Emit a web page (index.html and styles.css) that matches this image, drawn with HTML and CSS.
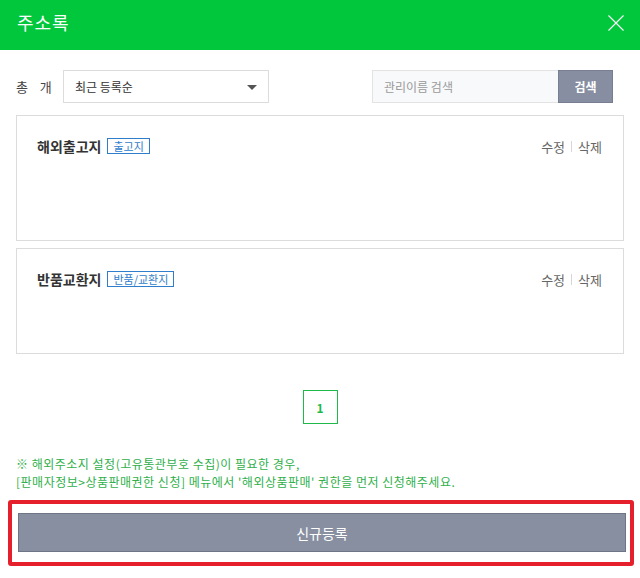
FILE: index.html
```html
<!DOCTYPE html>
<html>
<head>
    <title>주소록</title>
    <link rel="stylesheet" href="styles.css">
</head>
<body>
    <div class="modal">
        <div class="modal-header">
            <h1>주소록</h1>
            <button class="close" type="button">
                <svg width="16" height="16" viewBox="0 0 16 16">
                    <path d="M0.5 0.5 L15.5 15.5 M15.5 0.5 L0.5 15.5" stroke="#fff" stroke-width="1.1" fill="none"/>
                </svg>
            </button>
        </div>

        <div class="modal-body">
            <div class="toolbar">
                <span class="total">총 <em></em> 개</span>
                <div class="select">
                    <span>최근 등록순</span>
                    <i class="caret"></i>
                </div>
                <form class="search">
                    <input type="text" placeholder="관리이름 검색">
                    <button type="submit">검색</button>
                </form>
            </div>

            <ul class="addr-list">
                <li class="addr-item">
                    <div class="addr-head">
                        <strong>해외출고지</strong>
                        <span class="tag">출고지</span>
                        <div class="actions">
                            <a href="#">수정</a>
                            <span class="bar"></span>
                            <a href="#">삭제</a>
                        </div>
                    </div>
                    <div class="addr-detail">
                        <p></p>
                        <p></p>
                        <p></p>
                    </div>
                </li>
                <li class="addr-item">
                    <div class="addr-head">
                        <strong>반품교환지</strong>
                        <span class="tag">반품/교환지</span>
                        <div class="actions">
                            <a href="#">수정</a>
                            <span class="bar"></span>
                            <a href="#">삭제</a>
                        </div>
                    </div>
                    <div class="addr-detail">
                        <p></p>
                        <p></p>
                    </div>
                </li>
            </ul>

            <div class="paging">
                <a href="#" class="on">1</a>
            </div>

            <p class="notice">
                ※ 해외주소지 설정(고유통관부호 수집)이 필요한 경우,<br>
                [판매자정보&gt;상품판매권한 신청] 메뉴에서 '해외상품판매' 권한을 먼저 신청해주세요.
            </p>
        </div>

        <div class="modal-footer">
            <button type="button" class="btn-new">신규등록</button>
        </div>
    </div>
</body>
</html>
```

FILE: styles.css
```css
body {
    margin: 0;
    font-family: "Noto Sans CJK KR", "Noto Sans", sans-serif;
    color: #333;
    background: #fff;
}

.modal {
    width: 640px;
}

.modal-header {
    height: 50px;
    background: #00c73c;
    display: flex;
    align-items: center;
    justify-content: space-between;
    padding: 0 16px 0 17px;
    box-sizing: border-box;
}

.modal-header h1 {
    margin: 0 0 6px;
    font-size: 18px;
    font-weight: normal;
    line-height: 22px;
    letter-spacing: 1px;
    color: #fff;
}

.close {
    border: none;
    background: none;
    padding: 0;
    width: 16px;
    height: 16px;
    margin: 0 0 5px;
    cursor: pointer;
}

.close svg {
    display: block;
}

.modal-body {
    padding: 20px 16px 0;
}

.toolbar {
    display: flex;
    align-items: center;
    height: 33px;
    margin-right: 11px;
}

.total {
    font-size: 13px;
    color: #444;
    width: 47px;
}

.total em {
    display: inline-block;
    width: 6px;
}

.select {
    width: 206px;
    height: 33px;
    box-sizing: border-box;
    border: 1px solid #dcdcdc;
    display: flex;
    align-items: center;
    justify-content: space-between;
    padding: 0 11px 0 11px;
    font-size: 12px;
    color: #333;
}

.caret {
    width: 0;
    height: 0;
    border-left: 5px solid transparent;
    border-right: 5px solid transparent;
    border-top: 5px solid #555;
    margin-top: 1px;
}

.search {
    display: flex;
    margin: 0 0 0 auto;
}

.search input {
    width: 186px;
    height: 33px;
    box-sizing: border-box;
    border: 1px solid #e3e3e3;
    border-right: none;
    background: #f8f9fa;
    padding: 0 11px;
    font-family: inherit;
    font-size: 12px;
    outline: none;
}

.search input::placeholder {
    color: #9a9a9a;
}

.search button {
    width: 55px;
    height: 33px;
    border: 1px solid #777e91;
    background: #878ea1;
    color: #fff;
    font-family: inherit;
    font-size: 12px;
    font-weight: bold;
    padding: 0;
}

.addr-list {
    list-style: none;
    margin: 12px 0 0;
    padding: 0;
}

.addr-item {
    border: 1px solid #dcdcdc;
    padding: 20px 21px 20px 20px;
}

.addr-item + .addr-item {
    margin-top: 7px;
}

.addr-head {
    display: flex;
    align-items: center;
    height: 20px;
}

.addr-head strong {
    font-size: 14px;
    color: #333;
    line-height: 20px;
}

.tag {
    margin-left: 6px;
    border: 1px solid #2f7dcb;
    color: #2f7dcb;
    font-size: 11px;
    line-height: 14px;
    padding: 0 5px;
}

.actions {
    margin-left: auto;
    display: flex;
    align-items: center;
    font-size: 13px;
}

.actions a {
    color: #666;
    text-decoration: none;
}

.bar {
    width: 1px;
    height: 11px;
    background: #d6d6d6;
    margin: 0 6px;
}

.addr-detail {
    margin-top: 4px;
}

.addr-detail p {
    margin: 0;
    height: 20px;
}

.paging {
    display: flex;
    justify-content: center;
    margin-top: 36px;
}

.paging a {
    width: 35px;
    height: 34px;
    box-sizing: border-box;
    border: 1px solid #1fb94a;
    display: flex;
    align-items: center;
    justify-content: center;
    color: #1fb94a;
    font-size: 12px;
    font-weight: bold;
    text-decoration: none;
}

.notice {
    margin: 31px 0 0;
    font-size: 12px;
    line-height: 18px;
    letter-spacing: 0.5px;
    color: #2fb04b;
}

.modal-footer {
    margin: 9px 6px 0 8px;
    border: 4px solid #e5202c;
    border-radius: 3px;
    padding: 9px 4px 10px 6px;
}

.btn-new {
    display: block;
    width: 100%;
    height: 39px;
    border: 1px solid #6e7586;
    background: #878fa1;
    color: #fff;
    font-family: inherit;
    font-size: 14px;
    cursor: pointer;
}
```
